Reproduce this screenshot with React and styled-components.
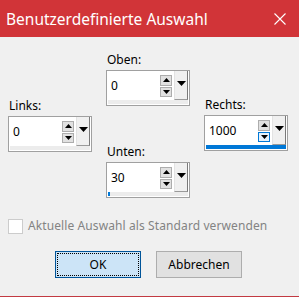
import React from "react";
import styled, { createGlobalStyle } from "styled-components";

const GlobalStyle = createGlobalStyle`
  html, body { margin: 0; padding: 0; background: #f0f0f0; }
  body { width: 299px; height: 297px; overflow: hidden; font-family: "Noto Sans", "Open Sans", sans-serif; }
  * { box-sizing: border-box; }
`;

const Window = styled.div`
  width: 299px;
  height: 297px;
  display: flex;
  flex-direction: column;
  background: #f0f0f0;
  border-bottom: 1px solid #c23a42;
`;

const TitleBar = styled.div`
  height: 37px;
  flex: none;
  background: #d13438;
  display: flex;
  align-items: center;
  justify-content: space-between;
  padding-left: 6px;
`;

const Title = styled.span`
  color: #ffffff;
  font-size: 15.5px;
  line-height: 20px;
`;

const CloseButton = styled.div`
  width: 38px;
  height: 37px;
  display: flex;
  align-items: center;
  justify-content: center;
`;

const Body = styled.div`
  flex: 1;
  display: flex;
  flex-direction: column;
  padding: 15px 0 0 8px;
`;

const Fields = styled.div`
  display: grid;
  grid-template-columns: repeat(3, 84px);
  column-gap: 14px;
`;

const Column = styled.div`
  display: flex;
  flex-direction: column;
  padding-top: ${(p) => p.$offset}px;
  gap: ${(p) => p.$gap || 0}px;
`;

const Field = styled.div`
  display: flex;
  flex-direction: column;
`;

const Label = styled.label`
  font-size: 12px;
  line-height: 16px;
  color: #000;
  margin-bottom: 2px;
  padding-left: 1px;
`;

const SpinBox = styled.div`
  width: 84px;
  height: 36px;
  border: 1px solid #a0a0a0;
  background: #ffffff;
  display: flex;
  flex-direction: column;
`;

const SpinMain = styled.div`
  flex: 1;
  display: flex;
`;

const Edit = styled.div`
  flex: 1;
  display: flex;
  align-items: center;
  padding-left: 4px;
  font-size: 12px;
  color: #000;
`;

const Arrows = styled.div`
  width: 12px;
  display: flex;
  flex-direction: column;
  gap: 1px;
  padding: 4px 0 3px;
`;

const ArrowButton = styled.div`
  flex: 1;
  border: 1px solid ${(p) => (p.$hover ? "#0078d7" : "#adadad")};
  background: ${(p) => (p.$hover ? "#e5f1fb" : "#e1e1e1")};
  display: flex;
  align-items: center;
  justify-content: center;
`;

const DropButton = styled.div`
  width: 14px;
  margin: 0 1px 0 2px;
  background: #f0f0f0;
  border-left: 1px solid #e3e3e3;
  border-right: 1px solid #7a7a7a;
  border-bottom: 1px solid #9a9a9a;
  display: flex;
  justify-content: center;
  padding-top: 10px;
`;

const Track = styled.div`
  height: 4px;
  margin: 0 1px 1px;
  background: #ececec;
  display: flex;
`;

const TrackFill = styled.div`
  height: 100%;
  background: #0078d7;
`;

const CheckRow = styled.div`
  display: flex;
  align-items: center;
  gap: 5px;
  margin-top: 20px;
`;

const CheckBox = styled.div`
  width: 15px;
  height: 15px;
  border: 1px solid #cccccc;
  background: #ffffff;
`;

const CheckLabel = styled.span`
  font-size: 12px;
  line-height: 16px;
  letter-spacing: 0.1px;
  color: #838383;
`;

const Buttons = styled.div`
  display: flex;
  gap: 15px;
  padding-left: 47px;
  margin-top: 17px;
`;

const Button = styled.div`
  width: 86px;
  height: 27px;
  display: flex;
  align-items: center;
  justify-content: center;
  font-size: 12px;
  color: #000;
  border: 1px solid ${(p) => (p.$default ? "#005499" : "#adadad")};
  background: ${(p) => (p.$default ? "#cce4f7" : "#e1e1e1")};
  outline: ${(p) => (p.$default ? "1px dotted #000" : "none")};
  outline-offset: -3px;
`;

const Up = () => (
  <svg width="7" height="4" viewBox="0 0 7 4">
    <polygon points="0,4 7,4 3.5,0" fill="#000" />
  </svg>
);

const Down = () => (
  <svg width="7" height="4" viewBox="0 0 7 4">
    <polygon points="0,0 7,0 3.5,4" fill="#000" />
  </svg>
);

const BigDown = () => (
  <svg width="9" height="5" viewBox="0 0 9 5">
    <polygon points="0,0 9,0 4.5,5" fill="#000" />
  </svg>
);

const MAX = 1000;

const Spinner = ({ label, value, hoverDown }) => (
  <Field>
    <Label>{label}</Label>
    <SpinBox>
      <SpinMain>
        <Edit>{value}</Edit>
        <Arrows>
          <ArrowButton>
            <Up />
          </ArrowButton>
          <ArrowButton $hover={hoverDown}>
            <Down />
          </ArrowButton>
        </Arrows>
        <DropButton>
          <BigDown />
        </DropButton>
      </SpinMain>
      <Track>
        <TrackFill style={{ width: `${(value / MAX) * 100}%`, minWidth: value > 0 ? 1 : 0 }} />
      </Track>
    </SpinBox>
  </Field>
);

export default function App() {
  return (
    <>
      <GlobalStyle />
      <Window>
        <TitleBar>
          <Title>Benutzerdefinierte Auswahl</Title>
          <CloseButton>
            <svg width="12" height="12" viewBox="0 0 12 12">
              <path d="M0.5 0.5 L11.5 11.5 M11.5 0.5 L0.5 11.5" stroke="#fff" strokeWidth="1.1" />
            </svg>
          </CloseButton>
        </TitleBar>
        <Body>
          <Fields>
            <Column $offset={46}>
              <Spinner label="Links:" value={0} />
            </Column>
            <Column $offset={0} $gap={38}>
              <Spinner label="Oben:" value={0} />
              <Spinner label="Unten:" value={30} />
            </Column>
            <Column $offset={45}>
              <Spinner label="Rechts:" value={1000} hoverDown />
            </Column>
          </Fields>
          <CheckRow>
            <CheckBox />
            <CheckLabel>Aktuelle Auswahl als Standard verwenden</CheckLabel>
          </CheckRow>
          <Buttons>
            <Button $default>OK</Button>
            <Button>Abbrechen</Button>
          </Buttons>
        </Body>
      </Window>
    </>
  );
}
